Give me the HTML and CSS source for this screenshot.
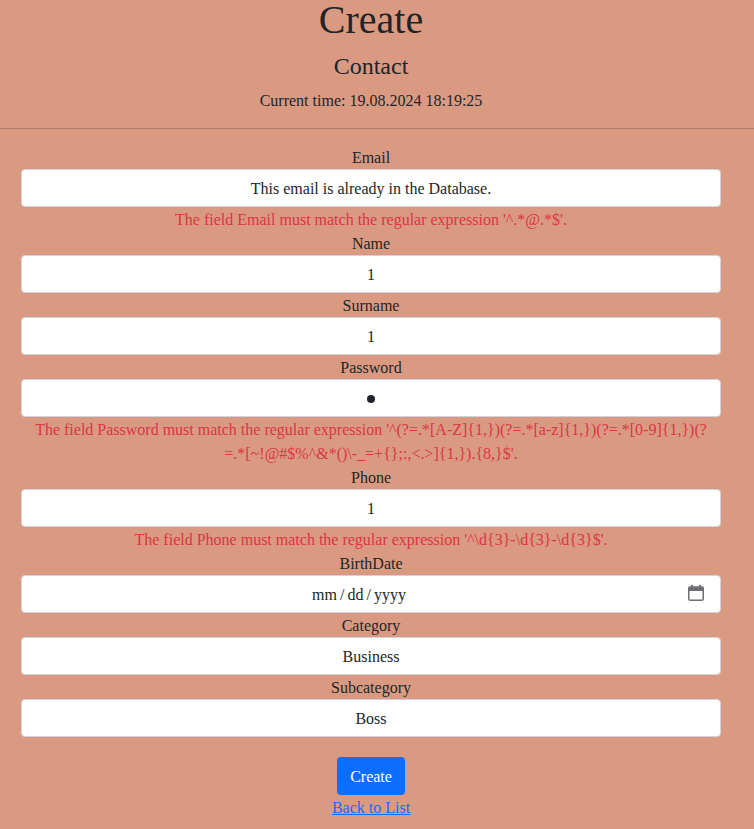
FILE: index.html
```html
<!DOCTYPE html>
<html lang="en">
<head>
<meta charset="utf-8">
<title>Create</title>
<link rel="stylesheet" href="styles.css">
</head>
<body>
<header>
<h1>Create</h1>
<h4>Contact</h4>
<p class="time">Current time: 19.08.2024 18:19:25</p>
</header>
<hr>
<form>
<div class="group"><label>Email</label><div class="control">This email is already in the Database.</div><span class="error">The field Email must match the regular expression '^.*@.*$'.</span></div>
<div class="group"><label>Name</label><div class="control">1</div></div>
<div class="group"><label>Surname</label><div class="control">1</div></div>
<div class="group"><label>Password</label><div class="control"><span class="dot"></span></div><span class="error">The field Password must match the regular expression '^(?=.*[A-Z]{1,})(?=.*[a-z]{1,})(?=.*[0-9]{1,})(?<br>=.*[~!@#$%^&amp;*()\-_=+{};:,&lt;.&gt;]{1,}).{8,}$'.</span></div>
<div class="group"><label>Phone</label><div class="control">1</div><span class="error">The field Phone must match the regular expression '^\d{3}-\d{3}-\d{3}$'.</span></div>
<div class="group"><label>BirthDate</label><div class="control date"><span class="date-text"><span>mm</span><span>/</span><span>dd</span><span>/</span><span>yyyy</span></span><svg class="calendar" width="16" height="16" viewBox="0 0 16 16"><rect x=".75" y="2.25" width="14.5" height="13" rx="1.5" fill="none" stroke="#6e6e73" stroke-width="1.5"/><path d="M0 6V3.2Q0 1.6 1.6 1.6H3V0h2v1.6h6V0h2v1.6h1.4Q16 1.6 16 3.2V6z" fill="#6e6e73"/></svg></div></div>
<div class="group"><label>Category</label><div class="control">Business</div></div>
<div class="group"><label>Subcategory</label><div class="control">Boss</div></div>
<button class="submit" type="button">Create</button>
</form>
<a class="back" href="#">Back to List</a>
</body>
</html>
```
FILE: styles.css
```css
* { box-sizing: border-box; }
body {
  margin: 0;
  height: 829px;
  overflow: hidden;
  background: #da9a82;
  color: #212529;
  font: 16px/24px "Liberation Serif", "Times New Roman", serif;
  text-align: center;
}
header, form { width: 700px; margin-left: 21px; }
header { padding-top: 1px; }
h1 { margin: 0 0 13px; font-size: 40px; line-height: 38px; font-weight: 500; }
h4 { margin: 0 0 8px; font-size: 24px; line-height: 29px; font-weight: 500; }
.time { margin: 0; }
hr { margin: 15px 0 16px; border: 0; border-top: 1px solid #ac7c6c; }
.group { display: flex; flex-direction: column; }
label, .error { padding-top: 1px; margin-bottom: -1px; }
.control {
  display: flex;
  align-items: center;
  justify-content: center;
  height: 38px;
  padding: 2px 12px 0;
  background: #fff;
  border: 1px solid #ced4da;
  border-radius: 4px;
}
.error { color: #dc3545; }
.dot { width: 8px; height: 8px; border-radius: 50%; background: #212529; }
.date { padding-right: 16px; }
.date-text { flex: 1; display: flex; justify-content: center; gap: 3px; padding-right: 4px; }
.calendar { margin-top: -5px; }
.submit {
  display: block;
  width: 68px;
  height: 38px;
  margin: 20px auto 0;
  padding: 2px 0 0;
  border: 0;
  border-radius: 4px;
  background: #0d6efd;
  color: #fff;
  font: inherit;
}
.back {
  display: block;
  width: 700px;
  margin: 1px 0 0 21px;
  color: #0d6efd;
}
```
